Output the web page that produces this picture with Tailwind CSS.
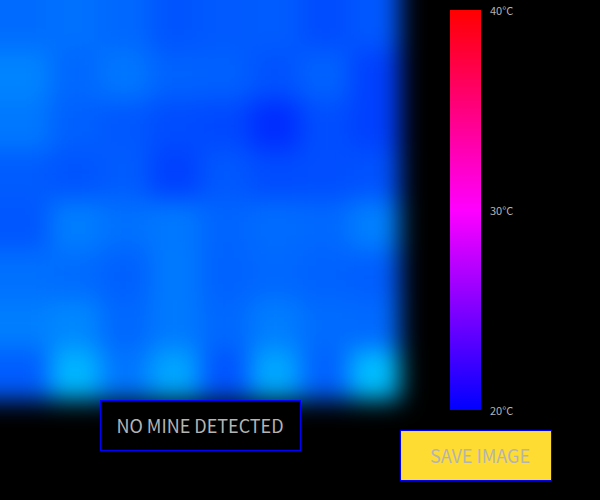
<!DOCTYPE html>
<html lang="en">
<head>
<meta charset="utf-8">
<meta name="viewport" content="width=device-width, initial-scale=1">
<title>Thermal mine detector</title>
<script src="https://cdn.jsdelivr.net/npm/@tailwindcss/browser@4"></script>
</head>
<body class="min-h-screen overflow-hidden bg-black font-['Noto_Sans_CJK_JP','Noto_Sans',sans-serif] text-[#b4b4b4]">
<main class="grid grid-cols-[2fr_1fr]">
  <section class="flex flex-col" aria-label="Thermal view">
    <svg class="block aspect-square w-full overflow-visible" viewBox="0 0 400 400" role="img" aria-label="Thermal image">
      <defs>
        <filter id="soften" filterUnits="userSpaceOnUse" x="-60" y="-60" width="520" height="520" color-interpolation-filters="sRGB">
          <feGaussianBlur stdDeviation="12"/>
        </filter>
      </defs>
      <g id="cells" filter="url(#soften)" shape-rendering="crispEdges"></g>
    </svg>
    <output class="relative mx-auto flex h-[51px] w-[201px] items-center justify-center border border-[#0000ff] bg-black pb-0.5 text-lg leading-6">NO MINE DETECTED</output>
  </section>
  <section class="flex flex-col pt-[10px]" aria-label="Temperature scale">
    <div class="flex pl-[50px]">
      <div class="h-[400px] w-[31px] bg-linear-to-b/srgb from-[#ff0000] via-[#ff00ff] to-[#0000ff]"></div>
      <ul class="-mt-2 -mb-2 flex flex-col justify-between pl-[9px] text-[11px] leading-4">
        <li>40°C</li>
        <li>30°C</li>
        <li>20°C</li>
      </ul>
    </div>
    <button type="button" class="mt-5 flex h-[51px] w-[152px] items-center border border-[#0000ff] bg-[#ffdc32] pb-0.5 pl-[29px] text-lg leading-6">SAVE IMAGE</button>
  </section>
</main>
<script>
// Sensor readings, 8 x 8; each one is the green channel of its cell.
const readings = [
  [108, 112, 104, 84, 90, 92, 76, 88],
  [132, 104, 118, 98, 96, 82, 98, 64],
  [120, 96, 88, 76, 72, 44, 78, 64],
  [92, 84, 92, 64, 88, 76, 78, 82],
  [86, 126, 112, 120, 100, 108, 104, 128],
  [112, 108, 96, 122, 98, 104, 98, 94],
  [126, 136, 104, 122, 104, 126, 108, 106],
  [92, 182, 118, 166, 84, 168, 98, 190]
];
const cells = document.getElementById('cells');
readings.forEach((row, r) => row.forEach((value, c) => {
  const rect = document.createElementNS('http://www.w3.org/2000/svg', 'rect');
  // The first row and column run past the frame so that its edges stay bright.
  const left = c ? c * 50 : -50;
  const top = r ? r * 50 : -50;
  rect.setAttribute('x', left);
  rect.setAttribute('y', top);
  rect.setAttribute('width', (c + 1) * 50 - left);
  rect.setAttribute('height', (r + 1) * 50 - top);
  rect.setAttribute('fill', `rgb(0 ${value} 255)`);
  cells.appendChild(rect);
}));
</script>
</body>
</html>
